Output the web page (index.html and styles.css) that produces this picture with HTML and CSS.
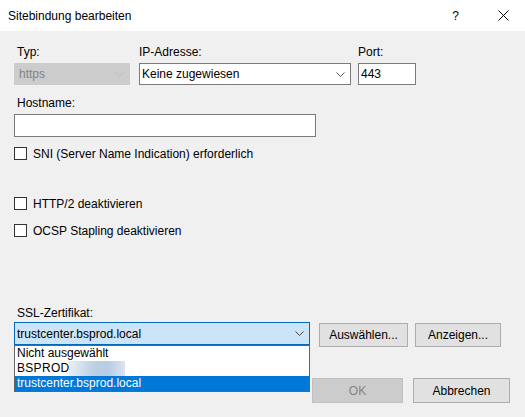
FILE: index.html
```html
<!DOCTYPE html>
<html lang="de">
<head>
<meta charset="utf-8">
<title>Sitebindung bearbeiten</title>
<link rel="stylesheet" href="styles.css">
</head>
<body>
<div class="titlebar">
  <span class="title">Sitebindung bearbeiten</span>
  <span class="help">?</span>
  <svg class="close" width="11" height="11" viewBox="0 0 11 11"><path d="M0.5 0.5 L10.5 10.5 M10.5 0.5 L0.5 10.5" stroke="#000" stroke-width="1" fill="none"/></svg>
</div>
<div class="content">
  <div class="row1">
    <div class="field f-typ">
      <div class="lbl lbl-typ">Typ:</div>
      <div class="combo disabled"><span>https</span>
        <svg class="chev" width="9" height="5" viewBox="0 0 9 5"><path d="M0.5 0.5 L4.5 4.5 L8.5 0.5" stroke="#bdbdbd" fill="none"/></svg>
      </div>
    </div>
    <div class="field f-ip">
      <div class="lbl">IP-Adresse:</div>
      <div class="combo"><span>Keine zugewiesen</span>
        <svg class="chev" width="9" height="5" viewBox="0 0 9 5"><path d="M0.5 0.5 L4.5 4.5 L8.5 0.5" stroke="#555" fill="none"/></svg>
      </div>
    </div>
    <div class="field f-port">
      <div class="lbl">Port:</div>
      <div class="input"><span>443</span></div>
    </div>
  </div>
  <div class="lbl lbl-host">Hostname:</div>
  <div class="input host"></div>
  <div class="check sni"><span class="box"></span><span>SNI (Server Name Indication) erforderlich</span></div>
  <div class="check http2"><span class="box"></span><span>HTTP/2 deaktivieren</span></div>
  <div class="check ocsp"><span class="box"></span><span>OCSP Stapling deaktivieren</span></div>
  <div class="lbl lbl-ssl">SSL-Zertifikat:</div>
  <div class="sslrow">
    <div class="combo focus ssl"><span>trustcenter.bsprod.local</span>
      <svg class="chev" width="9" height="5" viewBox="0 0 9 5"><path d="M0.5 0.5 L4.5 4.5 L8.5 0.5" stroke="#444" fill="none"/></svg>
      <ul class="dropdown">
        <li>Nicht ausgewählt</li>
        <li><span class="bs">BSPROD</span><span class="blur"></span></li>
        <li class="sel">trustcenter.bsprod.local</li>
      </ul>
    </div>
    <button class="btn b-sel">Auswählen...</button>
    <button class="btn b-show">Anzeigen...</button>
  </div>
  <div class="footer">
    <button class="btn b-ok" disabled>OK</button>
    <button class="btn b-cancel">Abbrechen</button>
  </div>
</div>
</body>
</html>
```
FILE: styles.css
```css
* { box-sizing: border-box; }
html, body { margin: 0; padding: 0; }
body {
  width: 525px;
  height: 417px;
  background: #f0f0f0;
  font-family: "Liberation Sans", Arial, sans-serif;
  font-size: 12px;
  color: #000;
  overflow: hidden;
}
.titlebar {
  height: 31px;
  background: #fff;
  display: flex;
  align-items: center;
  padding-left: 8px;
}
.title { flex: 1; }
.help { margin-right: 39px; font-size: 12px; }
.close { margin-right: 16px; }
.content { padding: 0 14px; }
.row1 { display: flex; margin-top: 14px; }
.field { display: flex; flex-direction: column; }
.f-typ { width: 116px; margin-right: 9px; }
.f-ip { width: 212px; margin-right: 7px; }
.f-port { width: 58px; }
.lbl { height: 14px; line-height: 14px; white-space: nowrap; }
.lbl-typ { padding-left: 3px; }
.combo, .input {
  position: relative;
  height: 22px;
  margin-top: 4px;
  border: 1px solid #7a7a7a;
  background: #fff;
  display: flex;
  align-items: center;
  padding-left: 2px;
  white-space: nowrap;
}
.combo > span, .input > span { flex: 1; }
.chev { margin-right: 5px; }
.combo.disabled { background: #cccccc; border-color: #cccccc; color: #838383; padding-left: 4px; }
.lbl-host { margin-top: 11px; padding-left: 3px; }
.input.host { width: 302px; height: 23px; }
.check { display: flex; align-items: center; height: 13px; }
.box {
  width: 13px; height: 13px;
  border: 1px solid #333;
  background: #fff;
  margin-right: 6px;
}
.sni { margin-top: 10px; }
.http2 { margin-top: 37px; }
.ocsp { margin-top: 14px; }
.lbl-ssl { margin-top: 69px; padding-left: 3px; }
.sslrow { display: flex; align-items: flex-start; margin-top: 2px; }
.combo.ssl {
  width: 296px; height: 23px; margin-top: 0;
  background: #cce4f7; border-color: #0069c0;
  margin-right: 9px;
}
.dropdown {
  position: absolute;
  left: -1px; top: 22px;
  width: 296px; height: 47px;
  margin: 0; padding: 0;
  list-style: none;
  background: #fff;
  border: 1px solid #646464;
  z-index: 2;
}
.dropdown li {
  height: 15px; line-height: 15px;
  padding-left: 2px;
  display: flex; align-items: center;
}
.dropdown li.sel { background: #0078d7; color: #fff; }
.bs { letter-spacing: 0.3px; }
.blur {
  display: block;
  width: 56px; height: 15px;
  background: linear-gradient(90deg, #e8eef6 0%, #bccfe4 45%, #b8cce3 70%, #dbe5f0 100%);
}
.btn {
  font-family: inherit;
  font-size: 12px;
  color: #000;
  background: #e1e1e1;
  border: 1px solid #adadad;
  height: 24px;
  padding: 0;
  margin: 1px 0 0 0;
}
.b-sel { width: 89px; margin-right: 7px; }
.b-show { width: 86px; }
.footer { display: flex; justify-content: flex-end; margin-top: 30px; margin-right: 1px; }
.b-ok { width: 91px; height: 25px; margin-right: 10px; background: #cccccc; border-color: #bfbfbf; color: #838383; }
.b-cancel { width: 97px; height: 25px; }
```
